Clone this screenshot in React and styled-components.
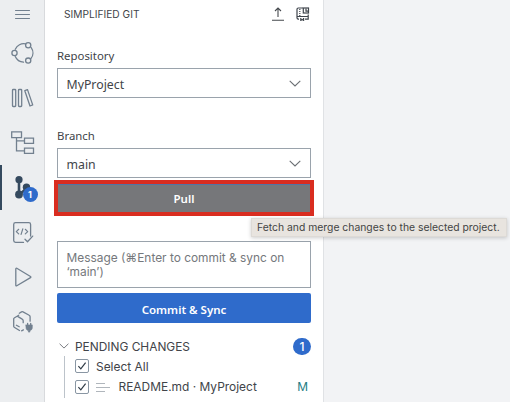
import React from 'react';
import styled, { createGlobalStyle, css } from 'styled-components';

const Global = createGlobalStyle`
  * { box-sizing: border-box; }
  body {
    margin: 0;
    overflow: hidden;
    background: #f2f3f5;
    color: #414449;
    font-family: Inter, sans-serif;
  }
`;

const ui = css`font-family: 'Noto Sans', sans-serif;`;

const Window = styled.div`
  display: flex;
  position: relative;
  width: 510px;
  height: 402px;
  overflow: hidden;
`;

const ActivityBar = styled.nav`
  display: flex;
  flex-direction: column;
  width: 45px;
  background: #eceef0;
  border-right: 1px solid #d8dadd;
`;

const Activity = styled.div`
  position: relative;
  flex: none;
  height: ${p => p.$height || 45}px;
  color: #72808f;
  ${p => p.$active && css`
    color: #354a5f;
    box-shadow: inset 2px 0 #354a5f;
  `}
  svg { display: block; }
`;

const CountBadge = styled.span`
  display: flex;
  align-items: center;
  justify-content: center;
  flex: none;
  width: 18px;
  height: 17px;
  border-radius: 9px;
  background: #2f6bcb;
  color: #fff;
  font-size: 12px;
  font-weight: 500;
  ${p => p.$floating && css`
    position: absolute;
    left: 22.5px;
    top: 22px;
    width: 15px;
    height: 15px;
    font-size: 9px;
    font-weight: 700;
  `}
`;

const Panel = styled.main`
  display: flex;
  flex-direction: column;
  width: 279px;
  padding: 0 12px;
  background: #fff;
  border-right: 1px solid #e0e2e5;
`;

const Header = styled.header`
  display: flex;
  align-items: center;
  height: 28px;
  padding-left: 7px;
  flex: none;
`;

const Title = styled.h1`
  flex: 1;
  margin: 0;
  font-size: 10.2px;
  font-weight: 400;
  white-space: nowrap;
`;

const HeaderIcons = styled.div`
  display: flex;
  gap: 11px;
  padding-right: 1.5px;
  svg { display: block; }
`;

const Label = styled.label`
  ${ui}
  height: 24px;
  margin-top: ${p => p.$gap}px;
  flex: none;
  font-size: 11.4px;
  line-height: 24px;
`;

const Select = styled.div`
  ${ui}
  display: flex;
  align-items: center;
  justify-content: space-between;
  flex: none;
  width: 254px;
  height: 30px;
  padding: 2px 9px 0 8.5px;
  border: 1px solid #9aa3ac;
  font-size: 12.3px;
  svg { display: block; margin-top: -2px; }
`;

const Button = styled.button`
  ${ui}
  display: flex;
  align-items: center;
  justify-content: center;
  flex: none;
  width: 254px;
  height: 30px;
  margin: 5px 0 0;
  padding: 2px 0 0;
  border: 0;
  border-radius: 2px;
  background: #2f6bcb;
  color: #fff;
  font-size: 11.5px;
  font-weight: 600;
`;

const PullButton = styled(Button)`
  width: 260px;
  height: 36px;
  margin: 2px -3px 0;
  padding: 1px 0 0;
  border: 4px solid #d92d20;
  border-radius: 0;
  background: #76777a;
  box-shadow: inset 0 1px #5273a5;
`;

const Message = styled.div`
  flex: none;
  width: 254px;
  height: 47px;
  margin-top: 25px;
  padding: 9px 8.5px 0;
  border: 1px solid #9aa3ac;
  color: #75787c;
  font-size: 11.9px;
  line-height: 14px;
  white-space: pre-line;
`;

const SectionHead = styled.div`
  display: flex;
  align-items: center;
  flex: none;
  height: 22px;
  margin-top: 12px;
  padding: 0 0 0 2px;
  font-size: 11.9px;
  svg { display: block; margin-right: 6px; }
`;

const SectionTitle = styled.span`
  flex: 1;
`;

const Changes = styled.div`
  margin: -1px 0 0 7px;
  padding-left: 9.5px;
  border-left: 1px solid #bcc3ca;
  height: 42px;
`;

const ChangeRow = styled.div`
  display: flex;
  align-items: center;
  height: 20.5px;
  font-size: 11.95px;
  white-space: nowrap;
  svg { display: block; flex: none; }
`;

const Checkbox = styled.span`
  display: flex;
  align-items: center;
  justify-content: center;
  flex: none;
  width: 14px;
  height: 14px;
  margin-right: 7.5px;
  border: 1px solid #8996a3;
  border-radius: 2px;
`;

const FileName = styled.span`
  flex: 1;
  margin-left: 8.5px;
`;

const Status = styled.span`
  margin-right: 3px;
  color: #237b83;
`;

const Tooltip = styled.div`
  position: absolute;
  left: 251px;
  top: 218px;
  width: 256px;
  height: 19px;
  padding-left: 5px;
  background: #e8e4df;
  border: 1px solid #dddad6;
  box-shadow: 0 1px 4px rgba(0, 0, 0, 0.2);
  color: #444;
  font-size: 10.36px;
  line-height: 17px;
  white-space: nowrap;
`;

const Icon = ({ h = 45, children }) => (
  <svg width="44" height={h} viewBox={`0 0 44 ${h}`} fill="none" stroke="currentColor"
    strokeWidth="1.3" strokeLinecap="round" strokeLinejoin="round">{children}</svg>
);

const Chevron = ({ w = 12, h = 7 }) => (
  <svg width={w} height={h} viewBox="0 0 12 7" fill="none" stroke="#6b6f74" strokeWidth="1.1">
    <path d="M.7.8 6 6 11.3.8" />
  </svg>
);

const Check = () => (
  <Checkbox>
    <svg width="10" height="10" viewBox="0 0 10 10" fill="none" stroke="#303b46" strokeWidth="1.2">
      <path d="m1.4 5.2 2.4 2.6L8.6 1.6" />
    </svg>
  </Checkbox>
);

export default function App() {
  return (
    <>
      <Global />
      <Window>
        <ActivityBar>
          <Activity $height={30}>
            <Icon h={30}><path strokeWidth="1" d="M15.5 10.5h14M15.5 14.5h14M15.5 18.5h14" /></Icon>
          </Activity>
          <Activity>
            <Icon>
              <path d="M15.3 19.2A9.2 9.2 0 0 1 25.5 13.9M31.2 17.6a9.2 9.2 0 0 1-.3 11.1M23.5 32.2a9.2 9.2 0 0 1-8.2-5.6" />
              <circle cx="14.5" cy="23" r="2.6" /><circle cx="28.2" cy="15.3" r="2.6" /><circle cx="28.2" cy="30.6" r="2.6" />
            </Icon>
          </Activity>
          <Activity>
            <Icon>
              <rect x="12.5" y="14.5" width="3.2" height="17" rx=".7" />
              <rect x="18.5" y="14.5" width="3.2" height="17" rx=".7" />
              <path d="m24.8 15.7 2.7-1.1 5.2 15.3-2.7 1.1z" />
            </Icon>
          </Activity>
          <Activity>
            <Icon>
              <path strokeLinejoin="miter" d="M11.7 11.8h9.8v5.8h-9.8zM24.5 18.2h9v5.2h-9zM24.5 28.2h9v5.2h-9zM16.5 17.6v13.2h8M16.5 20.8h8" />
            </Icon>
          </Activity>
          <Activity $active>
            <Icon>
              <circle cx="19" cy="14.7" r="3.6" fill="currentColor" stroke="none" />
              <circle cx="19" cy="29.5" r="3.9" fill="currentColor" stroke="none" />
              <circle cx="26.5" cy="22.2" r="3.7" fill="currentColor" stroke="none" />
              <path strokeWidth="2.6" d="M19 15v14M20 29l6-5" />
            </Icon>
            <CountBadge $floating>1</CountBadge>
          </Activity>
          <Activity>
            <Icon>
              <path d="M23.5 32.4h-8a1.8 1.8 0 0 1-1.8-1.8V14.4a1.8 1.8 0 0 1 1.8-1.8h13.3a1.8 1.8 0 0 1 1.8 1.8v11.7M25 29.3l2.5 2.5 5.2-5.7" />
              <path strokeWidth="1.2" d="m18.7 19.3-2.4 2.3 2.4 2.3M25.3 19.3l2.4 2.3-2.4 2.3M22.8 18.8l-1.7 5.6" />
            </Icon>
          </Activity>
          <Activity>
            <Icon><path d="M15.8 13.9v16.3c0 .7.5.9 1 .6L30.5 22.6c.5-.3.5-.8 0-1.1L16.8 13.3c-.5-.3-1-.1-1 .6z" /></Icon>
          </Activity>
          <Activity>
            <Icon>
              <path d="M18.7 15.2 14.2 18a1 1 0 0 0-.5.9v7.4a1 1 0 0 0 .5.9l5.3 3.3M17.2 16.1l5 3a1.8 1.8 0 0 1 1 1.6v2M19.3 13.2l2.2-1.3a1.6 1.6 0 0 1 1.5 0l6.2 3.4a1.6 1.6 0 0 1 .9 1.4v4.5M16.4 25.2l2.8 1.5M21.6 30.8l1.8-.9" />
              <path fill="currentColor" strokeWidth=".6" d="M26 24.9h6.3v2.8c0 1.5-1 2.6-2.4 2.8v1.6h-1.5v-1.6c-1.4-.2-2.4-1.3-2.4-2.8z" />
              <path d="M27.6 23.3V25M30.7 23.3V25" />
            </Icon>
          </Activity>
        </ActivityBar>

        <Panel>
          <Header>
            <Title>SIMPLIFIED GIT</Title>
            <HeaderIcons>
              <svg width="14" height="14" viewBox="0 0 14 14" fill="none" stroke="#45494e" strokeWidth="1.1">
                <path d="M7 10V1.2M4 4l3-3 3 3M1 13.2h12" />
              </svg>
              <svg width="14" height="14" viewBox="0 0 14 14" fill="none" stroke="#3f454c" strokeWidth="1.2">
                <path d="M7 1H2.3C1.5 1 1 1.5 1 2.3v8.5c0 .8.5 1.3 1.3 1.3H3M1.2 9.5h11V7.5M12.2 9v3.2H9" />
                <path strokeDasharray="1 1" d="M3.8 2v7" />
                <rect x="7.3" y="1" width="5.2" height="5" />
                <path d="M10 1.5v2.7h2M4.8 11v2.4l1.4-.9 1.4.9V11" />
              </svg>
            </HeaderIcons>
          </Header>

          <Label $gap={16}>Repository</Label>
          <Select><span>MyProject</span><Chevron /></Select>

          <Label $gap={26}>Branch</Label>
          <Select><span>main</span><Chevron /></Select>
          <PullButton>Pull</PullButton>

          <Message>{'Message (⌘Enter to commit & sync on\n‘main’)'}</Message>
          <Button>Commit &amp; Sync</Button>

          <SectionHead>
            <Chevron w={10} h={6} />
            <SectionTitle>PENDING CHANGES</SectionTitle>
            <CountBadge>1</CountBadge>
          </SectionHead>
          <Changes>
            <ChangeRow><Check />Select All</ChangeRow>
            <ChangeRow>
              <Check />
              <svg width="14" height="10" viewBox="0 0 14 10" stroke="#b0b6bc">
                <path d="M0 1.5h9M0 5.5h14M0 9.5h9" />
              </svg>
              <FileName>README.md · MyProject</FileName>
              <Status>M</Status>
            </ChangeRow>
          </Changes>
        </Panel>

        <Tooltip>Fetch and merge changes to the selected project.</Tooltip>
      </Window>
    </>
  );
}
